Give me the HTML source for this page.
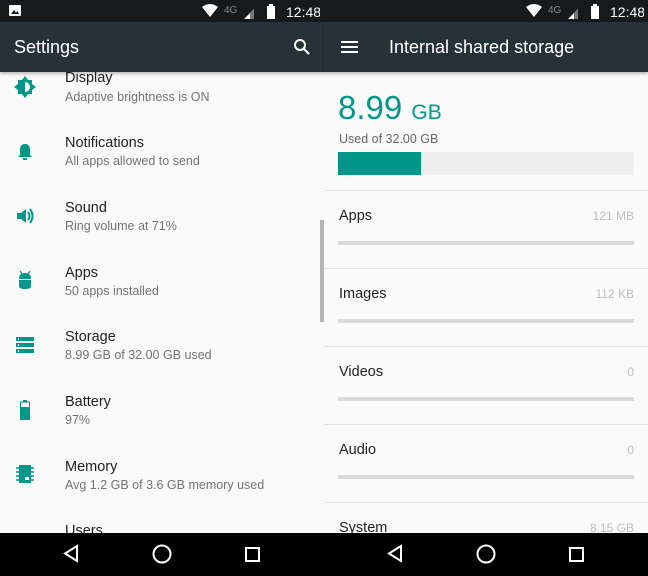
<!DOCTYPE html><html><head><style>
*{margin:0;padding:0;box-sizing:border-box}
body{width:648px;height:576px;overflow:hidden;background:#fafafa;font-family:"Liberation Sans",sans-serif;position:relative}
.abs{position:absolute}
.sb{top:0;height:22px;background:#151a1c;color:#fff;font-size:14px}
.tb{top:22px;height:50px;background:#263238;color:#fff;box-shadow:0 2px 3px rgba(0,0,0,.25);z-index:2}
.t{font-size:14.5px;color:#212121}
.s{font-size:12.5px;color:#737373}
.bar{left:338px;width:296px;height:4px;background:#dadada}
.div{left:324px;width:324px;height:1px;background:#e2e2e2}
.rt{left:339px;font-size:14.5px;color:#212121}
.rv{right:14px;font-size:12px;color:#bdbdbd}
</style></head><body>
<!-- status bars -->
<div class="abs sb" style="left:0;width:648px"></div>
<div class="abs" style="left:9px;top:5px;width:12px;height:11px;background:#fff;border-radius:1px"></div>
<svg class="abs" style="left:10px;top:8px" width="10" height="7"><path d="M1 6L4 2 6 4.5 7.5 3 9 6z" fill="#151a1c"/></svg>
<div class="abs" style="left:324px;top:0;width:1px;height:22px"></div>
<svg class="abs" style="left:200px;top:3px" width="120" height="17"><path d="M2 4Q10-2 18 4L10 14z" fill="#fff"/><text x="24" y="10" font-size="10" fill="#888" font-family="Liberation Sans">4G</text><path d="M44 16L54 6V16z" fill="#fff"/><path d="M50 10L54 6V16H50z" fill="#777"/><rect x="67" y="3" width="8" height="13" fill="#fff"/><rect x="69" y="1" width="4" height="2" fill="#fff"/><text x="86" y="14" font-size="14" fill="#fff" font-family="Liberation Sans">12:48</text></svg>
<svg class="abs" style="left:524px;top:3px" width="120" height="17"><path d="M2 4Q10-2 18 4L10 14z" fill="#fff"/><text x="24" y="10" font-size="10" fill="#888" font-family="Liberation Sans">4G</text><path d="M44 16L54 6V16z" fill="#fff"/><path d="M50 10L54 6V16H50z" fill="#777"/><rect x="67" y="3" width="8" height="13" fill="#fff"/><rect x="69" y="1" width="4" height="2" fill="#fff"/><text x="86" y="14" font-size="14" fill="#fff" font-family="Liberation Sans">12:48</text></svg>
<!-- toolbars -->
<div class="abs tb" style="left:0;width:324px"><div class="abs" style="left:14px;top:15px;font-size:18px">Settings</div>
<svg class="abs" style="left:292px;top:15px" width="20" height="20"><circle cx="8" cy="8" r="5" stroke="#fff" stroke-width="2" fill="none"/><path d="M12 12L17 17" stroke="#fff" stroke-width="2.2"/></svg></div>
<div class="abs tb" style="left:324px;width:324px"><svg class="abs" style="left:17px;top:18px" width="18" height="14"><path d="M0 2H17M0 7H17M0 12H17" stroke="#fff" stroke-width="2"/></svg><div class="abs" style="left:65px;top:15px;font-size:18px">Internal shared storage</div></div>
<!-- left list -->
<div class="abs" style="left:0;top:72px;width:324px;height:461px;overflow:hidden">
<svg class="abs" style="left:14px;top:4px" width="22" height="22"><path d="M11 0L14 4H18V8L22 11 18 14V18H14L11 22 8 18H4V14L0 11 4 8V4H8z" fill="#009688"/><path d="M11 6A5 5 0 0 1 11 16z" fill="#fafafa"/></svg>
<svg class="abs" style="left:16px;top:71px" width="18" height="18"><path d="M9 1C5 1 4 4 4 7V12L2 14H16L14 12V7C14 4 13 1 9 1z" fill="#009688"/><rect x="7" y="15" width="4" height="2" fill="#009688"/></svg>
<svg class="abs" style="left:16px;top:135px" width="20" height="18"><path d="M1 6H5L10 2V16L5 12H1z" fill="#009688"/><path d="M12 5Q15 9 12 13M14 2Q19 9 14 16" stroke="#009688" stroke-width="2" fill="none"/></svg>
<svg class="abs" style="left:17px;top:198px" width="16" height="20"><path d="M3 1L5 4M13 1L11 4" stroke="#009688" stroke-width="1.3"/><path d="M2 9Q2 3 8 3Q14 3 14 9V16Q14 19 8 19Q2 19 2 16z" fill="#009688"/><rect x="2" y="9" width="12" height="1" fill="#fafafa"/></svg>
<svg class="abs" style="left:16px;top:265px" width="20" height="16"><rect x="0" y="0" width="18" height="4" fill="#009688"/><rect x="0" y="6" width="18" height="4" fill="#009688"/><rect x="0" y="12" width="18" height="4" fill="#009688"/><rect x="2" y="1" width="1" height="2" fill="#fafafa"/><rect x="2" y="7" width="1" height="2" fill="#fafafa"/><rect x="2" y="13" width="1" height="2" fill="#fafafa"/></svg>
<svg class="abs" style="left:20px;top:328px" width="10" height="20"><rect x="3" y="0" width="4" height="2" fill="#009688"/><rect x="0.5" y="2" width="9" height="17" fill="none" stroke="#009688"/><rect x="0" y="7" width="10" height="13" fill="#009688"/></svg>
<svg class="abs" style="left:16px;top:393px" width="20" height="18"><rect x="3" y="0" width="12" height="18" fill="#009688"/><path d="M0 3H3M0 7H3M0 11H3M0 15H3M15 3H18M15 7H18M15 11H18M15 15H18" stroke="#009688" stroke-width="1.5"/><rect x="9" y="12" width="4" height="3" fill="#fafafa"/></svg>
<div class="abs t" style="left:65px;top:-2px">Display</div><div class="abs s" style="left:65px;top:18px">Adaptive brightness is ON</div>
<div class="abs t" style="left:65px;top:63px">Notifications</div><div class="abs s" style="left:65px;top:82px">All apps allowed to send</div>
<div class="abs t" style="left:65px;top:128px">Sound</div><div class="abs s" style="left:65px;top:147px">Ring volume at 71%</div>
<div class="abs t" style="left:65px;top:193px">Apps</div><div class="abs s" style="left:65px;top:212px">50 apps installed</div>
<div class="abs t" style="left:65px;top:257px">Storage</div><div class="abs s" style="left:65px;top:276px">8.99 GB of 32.00 GB used</div>
<div class="abs t" style="left:65px;top:322px">Battery</div><div class="abs s" style="left:65px;top:341px">97%</div>
<div class="abs t" style="left:65px;top:387px">Memory</div><div class="abs s" style="left:65px;top:406px">Avg 1.2 GB of 3.6 GB memory used</div>
<div class="abs t" style="left:65px;top:451px">Users</div>
<div class="abs" style="left:320px;top:148px;width:4px;height:102px;background:#b5b5b5"></div>
</div>
<!-- right -->
<div class="abs" style="left:338px;top:89px;font-size:33px;color:#009688">8.99 <span style="font-size:21px">GB</span></div>
<div class="abs" style="left:339px;top:132px;font-size:12.5px;color:#666">Used of 32.00 GB</div>
<div class="abs" style="left:338px;top:152px;width:296px;height:23px;background:#efefef"></div>
<div class="abs" style="left:338px;top:152px;width:83px;height:23px;background:#009688"></div>
<div class="abs div" style="top:190px"></div><div class="abs div" style="top:268px"></div><div class="abs div" style="top:346px"></div><div class="abs div" style="top:424px"></div><div class="abs div" style="top:502px"></div>
<div class="abs rt" style="top:208px">Apps</div><div class="abs rv" style="top:209px">121 MB</div><div class="abs bar" style="top:241px"></div>
<div class="abs rt" style="top:286px">Images</div><div class="abs rv" style="top:287px">112 KB</div><div class="abs bar" style="top:319px"></div>
<div class="abs rt" style="top:364px">Videos</div><div class="abs rv" style="top:365px">0</div><div class="abs bar" style="top:397px"></div>
<div class="abs rt" style="top:442px">Audio</div><div class="abs rv" style="top:443px">0</div><div class="abs bar" style="top:475px"></div>
<div class="abs rt" style="top:520px">System</div><div class="abs rv" style="top:521px">8.15 GB</div>
<!-- nav -->
<div class="abs" style="left:0;top:533px;width:648px;height:43px;background:#000"></div>
<svg class="abs" style="left:0;top:533px" width="648" height="43"><g fill="none" stroke="#fff" stroke-width="2"><path d="M77 13L65 20.5 77 28z"/><circle cx="162" cy="21" r="8.5"/><rect x="246" y="15" width="13" height="13"/><path d="M401 13L389 20.5 401 28z"/><circle cx="486" cy="21" r="8.5"/><rect x="570" y="15" width="13" height="13"/></g></svg>
</body></html>
